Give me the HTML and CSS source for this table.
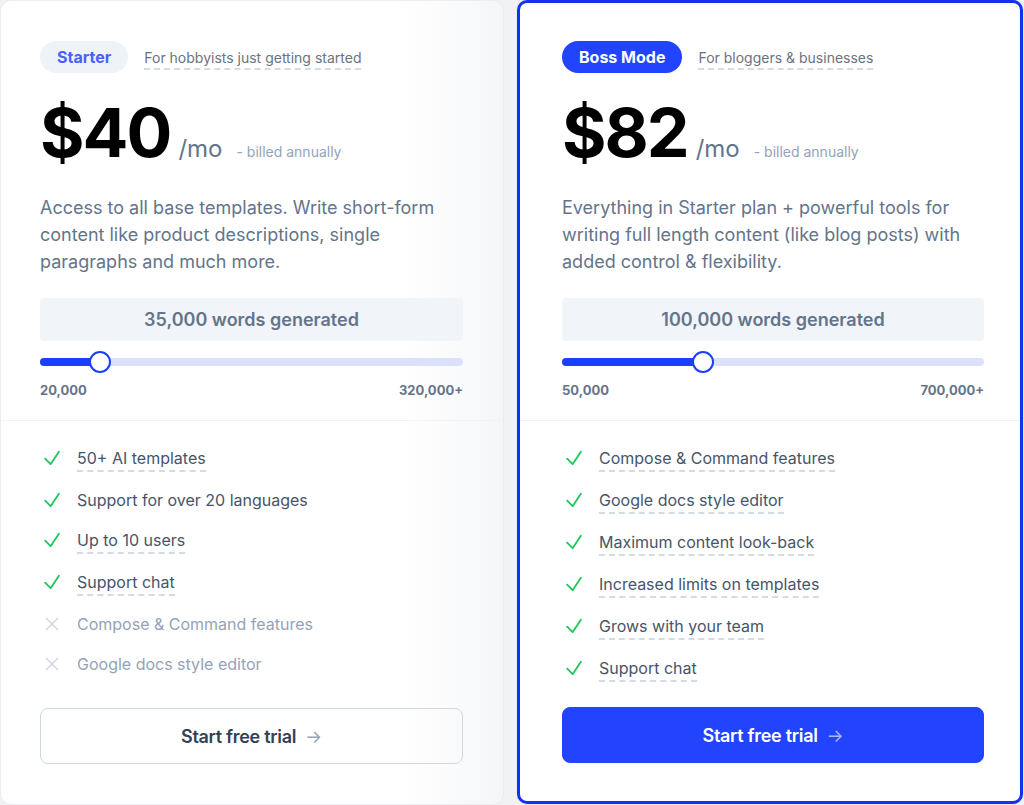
FILE: index.html
```html
<!DOCTYPE html>
<html>
<head>
<meta charset="UTF-8">
<title>Pricing</title>
<link rel="stylesheet" href="styles.css">
</head>
<body>
<div class="plans">

	<!-- Starter -->
	<div class="card">
		<div class="top">
			<div class="head">
				<span class="badge">Starter</span>
				<span class="tagline">For hobbyists just getting started</span>
			</div>
			<div class="price">
				<span class="amount">$40</span>
				<span class="per">/mo</span>
				<span class="billed">- billed annually</span>
			</div>
			<p class="desc">Access to all base templates. Write short-form content like product descriptions, single paragraphs and much more.</p>
			<div class="words">35,000 words generated</div>
			<div class="slider">
				<div class="track"><div class="fill" style="width:60px"></div></div>
				<div class="thumb" style="left:49px"></div>
			</div>
			<div class="range"><span>20,000</span><span>320,000+</span></div>
		</div>
		<div class="bottom">
			<ul class="features">
				<li><svg class="ico yes" viewBox="0 0 24 24"><path d="M4.5 12.75l6 6 9-13.5"/></svg><span class="tip">50+ AI templates</span></li>
				<li><svg class="ico yes" viewBox="0 0 24 24"><path d="M4.5 12.75l6 6 9-13.5"/></svg><span>Support for over 20 languages</span></li>
				<li><svg class="ico yes" viewBox="0 0 24 24"><path d="M4.5 12.75l6 6 9-13.5"/></svg><span class="tip">Up to 10 users</span></li>
				<li><svg class="ico yes" viewBox="0 0 24 24"><path d="M4.5 12.75l6 6 9-13.5"/></svg><span class="tip">Support chat</span></li>
				<li class="off"><svg class="ico no" viewBox="0 0 24 24"><path d="M6 18L18 6M6 6l12 12"/></svg><span>Compose &amp; Command features</span></li>
				<li class="off"><svg class="ico no" viewBox="0 0 24 24"><path d="M6 18L18 6M6 6l12 12"/></svg><span>Google docs style editor</span></li>
			</ul>
			<a class="btn" href="#">Start free trial <span class="arrow">&rarr;</span></a>
		</div>
	</div>

	<!-- Boss Mode -->
	<div class="card boss">
		<div class="top">
			<div class="head">
				<span class="badge">Boss Mode</span>
				<span class="tagline">For bloggers &amp; businesses</span>
			</div>
			<div class="price">
				<span class="amount">$82</span>
				<span class="per">/mo</span>
				<span class="billed">- billed annually</span>
			</div>
			<p class="desc">Everything in Starter plan + powerful tools for writing full length content (like blog posts) with added control &amp; flexibility.</p>
			<div class="words">100,000 words generated</div>
			<div class="slider">
				<div class="track"><div class="fill" style="width:141px"></div></div>
				<div class="thumb" style="left:130px"></div>
			</div>
			<div class="range"><span>50,000</span><span>700,000+</span></div>
		</div>
		<div class="bottom">
			<ul class="features">
				<li><svg class="ico yes" viewBox="0 0 24 24"><path d="M4.5 12.75l6 6 9-13.5"/></svg><span class="tip">Compose &amp; Command features</span></li>
				<li><svg class="ico yes" viewBox="0 0 24 24"><path d="M4.5 12.75l6 6 9-13.5"/></svg><span class="tip">Google docs style editor</span></li>
				<li><svg class="ico yes" viewBox="0 0 24 24"><path d="M4.5 12.75l6 6 9-13.5"/></svg><span class="tip">Maximum content look-back</span></li>
				<li><svg class="ico yes" viewBox="0 0 24 24"><path d="M4.5 12.75l6 6 9-13.5"/></svg><span class="tip">Increased limits on templates</span></li>
				<li><svg class="ico yes" viewBox="0 0 24 24"><path d="M4.5 12.75l6 6 9-13.5"/></svg><span class="tip">Grows with your team</span></li>
				<li><svg class="ico yes" viewBox="0 0 24 24"><path d="M4.5 12.75l6 6 9-13.5"/></svg><span class="tip">Support chat</span></li>
			</ul>
			<a class="btn" href="#">Start free trial <span class="arrow">&rarr;</span></a>
		</div>
	</div>

</div>
</body>
</html>
```

FILE: styles.css
```css
* { box-sizing: border-box; }
html, body { margin: 0; height: 100%; }
body { background: #f1f2f4; font-family: Inter, "Noto Sans", sans-serif; color: #475569; overflow: hidden; }

.plans { display: grid; grid-template-columns: 502px 506px; column-gap: 14px; padding: 1px 0 1px 1px; height: 805px; }

.card { display: flex; flex-direction: column; background: linear-gradient(90deg, #fff 0%, #fff 80%, #f5f6f8 100%); border-radius: 10px; box-shadow: 0 0 2px rgba(15, 23, 42, 0.08); }
.card.boss { background: #fff; border: 3px solid #1232f2; margin-top: -1px; }

.top { padding: 40px 40px 21px 39px; border-bottom: 1px solid #f1f3f6; }
.boss .top { padding: 38px 36px 21px 42px; }

.head { display: flex; align-items: center; gap: 16px; }
.badge { display: inline-block; height: 32px; line-height: 32px; padding: 0 17px; border-radius: 16px; background: #eef2f9; color: #4c5ffb; font-weight: 700; font-size: 16px; }
.boss .badge { background: #2244ff; color: #fff; }
.tagline { font-size: 14px; color: #6b7280; line-height: 20px; padding-top: 4px; border-bottom: 2px dashed #d5dbe3; }

.price { display: flex; align-items: baseline; margin-top: 25px; height: 68px; }
.amount { font-size: 68px; line-height: 68px; font-weight: 700; color: #000; letter-spacing: -2px; }
.per { font-size: 24px; color: #64748b; margin-left: 8px; }
.billed { font-size: 14px; color: #94a3b8; margin-left: 14px; }

.desc { margin: 28px 0 0; font-size: 18px; line-height: 27px; color: #64748b; }

.words { margin-top: 23px; height: 43px; line-height: 43px; background: #f1f4f8; border-radius: 4px; text-align: center; font-size: 18px; font-weight: 600; color: #64748b; }

.slider { position: relative; height: 22px; margin-top: 10px; }
.track { position: absolute; left: 0; right: 0; top: 7px; height: 8px; border-radius: 4px; background: #dce1fb; }
.fill { height: 8px; border-radius: 4px; background: #1d3ffb; }
.thumb { position: absolute; top: 0; width: 22px; height: 22px; border-radius: 50%; background: #fff; border: 2px solid #1d3ffb; }

.range { display: flex; justify-content: space-between; margin-top: 8px; font-size: 13px; line-height: 18px; font-weight: 700; color: #64748b; }

.bottom { flex: 1; display: flex; flex-direction: column; padding: 25px 40px 40px 39px; }
.boss .bottom { padding: 25px 36px 38px 42px; }

.features { list-style: none; margin: 0; padding: 0; display: flex; flex-direction: column; gap: 16px; }
.features li { display: flex; align-items: flex-start; font-size: 16px; line-height: 24px; color: #475569; }
.features li.off { color: #94a3b8; }
.tip { border-bottom: 2px dashed #d5dbe3; }
.ico { width: 22px; height: 22px; margin: 1px 14px 0 1px; fill: none; stroke-linecap: round; stroke-linejoin: round; flex: none; }
.ico.yes { stroke: #22c55e; stroke-width: 2; }
.ico.no { stroke: #cbd5e1; stroke-width: 1.5; }

.btn { margin-top: auto; display: flex; align-items: center; justify-content: center; height: 56px; border: 1px solid #cfd8e3; border-radius: 8px; text-decoration: none; font-size: 18px; font-weight: 600; color: #334155; letter-spacing: -0.3px; }
.arrow { margin-left: 9px; color: #94a3b8; font-weight: 400; }
.boss .btn { background: #2244ff; border-color: #2244ff; color: #fff; }
.boss .arrow { color: #aab7ff; }
```
